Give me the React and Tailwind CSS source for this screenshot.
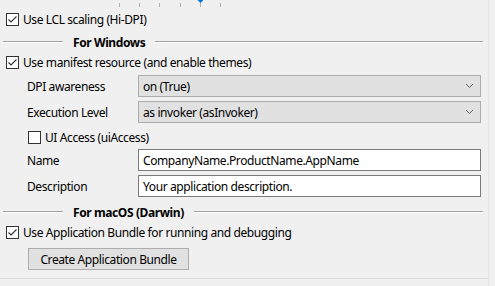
import React from "react";

const font = { fontFamily: '"Noto Sans", "Open Sans", sans-serif' };

function Check({ checked }) {
  return (
    <div className="w-[13px] h-[13px] border border-[#333333] bg-white shrink-0 relative">
      {checked && (
        <svg width="11" height="11" viewBox="0 0 11 11" className="absolute left-0 top-0">
          <polyline points="1.5,5.5 4,8 9.5,2.5" fill="none" stroke="#333333" strokeWidth="1.1" />
        </svg>
      )}
    </div>
  );
}

function CheckRow({ checked, label, className = "" }) {
  return (
    <div className={`flex items-center h-[18px] ${className}`}>
      <Check checked={checked} />
      <span className="ml-[4px] pt-[1px] text-[12px] text-black leading-none whitespace-nowrap">{label}</span>
    </div>
  );
}

function Separator({ label, className = "" }) {
  return (
    <div className={`flex items-center h-[20px] pl-[3px] pr-[5px] ${className}`}>
      <div className="w-[60px] h-[2px] border-t border-[#a0a0a0] border-b border-b-white" />
      <span className="mx-[10px] pt-[1px] text-[12px] font-bold text-black leading-none whitespace-nowrap">{label}</span>
      <div className="flex-1 h-[2px] border-t border-[#a0a0a0] border-b border-b-white" />
    </div>
  );
}

function Chevron() {
  return (
    <svg width="9" height="6" viewBox="0 0 9 6">
      <polyline points="1,1 4.5,4.5 8,1" fill="none" stroke="#606060" strokeWidth="1" />
    </svg>
  );
}

function ComboRow({ label, value, className = "" }) {
  return (
    <div className={`flex items-center h-[22px] pl-[27px] ${className}`}>
      <span className="w-[111px] pt-[1px] text-[12px] text-black leading-none whitespace-nowrap">{label}</span>
      <div className="w-[343px] h-[22px] border border-[#adadad] bg-[#e1e1e1] flex items-center pl-[4px] pr-[6px]">
        <span className="flex-1 pt-[1px] text-[12px] text-black leading-none whitespace-nowrap">{value}</span>
        <Chevron />
      </div>
    </div>
  );
}

function EditRow({ label, value, className = "" }) {
  return (
    <div className={`flex items-center h-[22px] pl-[27px] ${className}`}>
      <span className="w-[111px] pt-[1px] text-[12px] text-black leading-none whitespace-nowrap">{label}</span>
      <div className="w-[343px] h-[22px] border border-[#7a7a7a] bg-white flex items-center pl-[4px]">
        <span className="pt-[1px] text-[12px] text-black leading-none whitespace-nowrap">{value}</span>
      </div>
    </div>
  );
}

export default function App() {
  const ticks = [119, 139, 159, 180, 200, 220];
  return (
    <div className="w-[495px] h-[286px] bg-[#f0f0f0] overflow-hidden flex tracking-[-0.4px]" style={font}>
      <div className="w-[489px] h-full border-r border-[#e3e3e3] flex flex-col">
        <svg width="488" height="10" className="shrink-0">
          {ticks.map((x) => (
            <line key={x} x1={x + 0.5} y1="3" x2={x + 0.5} y2="7" stroke="#b0b0b0" strokeWidth="1" />
          ))}
          <polygon points="197.5,0 203.5,0 200.5,3" fill="#0078d7" />
        </svg>
        <div className="pl-[6px]">
          <CheckRow checked label="Use LCL scaling (Hi-DPI)" />
        </div>
        <Separator label="For Windows" className="mt-[4px]" />
        <div className="pl-[6px] mt-[1px]">
          <CheckRow checked label="Use manifest resource (and enable themes)" />
        </div>
        <ComboRow label="DPI awareness" value="on (True)" className="mt-[4px]" />
        <ComboRow label="Execution Level" value="as invoker (asInvoker)" className="mt-[4px]" />
        <div className="pl-[28px] mt-[5px]">
          <CheckRow label="UI Access (uiAccess)" />
        </div>
        <EditRow label="Name" value="CompanyName.ProductName.AppName" className="mt-[3px]" />
        <EditRow label="Description" value="Your application description." className="mt-[4px]" />
        <Separator label="For macOS (Darwin)" className="mt-[5px]" />
        <div className="pl-[6px] mt-[1px]">
          <CheckRow checked label="Use Application Bundle for running and debugging" />
        </div>
        <div className="pl-[28px] mt-[7px]">
          <button className="w-[161px] h-[22px] border border-[#adadad] bg-[#e1e1e1] pt-[1px] text-[12px] text-black leading-none flex items-center justify-center">
            Create Application Bundle
          </button>
        </div>
        <div className="mt-[8px] h-[1px] bg-[#dadada]" />
      </div>
    </div>
  );
}
